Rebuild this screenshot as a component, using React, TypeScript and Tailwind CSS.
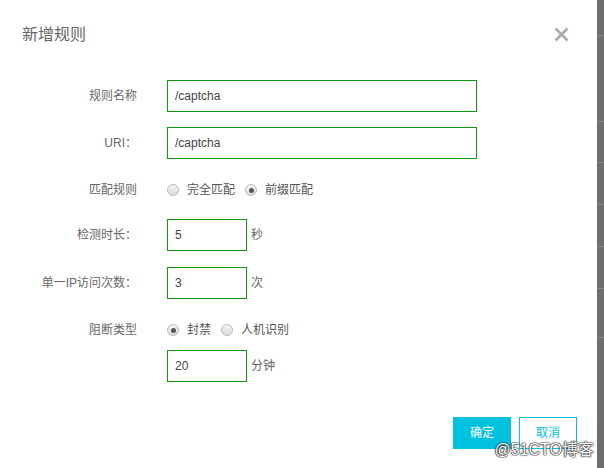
import React from 'react';

const font = { fontFamily: '"Liberation Sans", "Noto Sans CJK SC", sans-serif' };

const Radio: React.FC<{ checked?: boolean; label: string }> = ({ checked, label }) => (
  <label className="flex items-center">
    <span className="flex h-[12px] w-[12px] items-center justify-center rounded-full border border-[#b9b9b9] bg-gradient-to-b from-[#f4f4f4] to-[#dcdcdc]">
      {checked && <span className="h-[5px] w-[5px] rounded-full bg-[#555]" />}
    </span>
    <span className="ml-[8px] text-[12px] text-[#555]">{label}</span>
  </label>
);

const Row: React.FC<{ label: string; className?: string; children: React.ReactNode }> = ({
  label,
  className = '',
  children,
}) => (
  <div className={`flex h-[32px] items-center ${className}`}>
    <div className="w-[137px] shrink-0 text-right text-[12px] text-[#666]">{label}</div>
    <div className="ml-[30px] flex items-center">{children}</div>
  </div>
);

const Field: React.FC<{ value: string; wide?: boolean }> = ({ value, wide }) => (
  <div
    className={`flex h-[32px] items-center border border-[#109a10] pl-[7px] text-[12px] text-[#444] ${
      wide ? 'w-[310px]' : 'w-[80px]'
    }`}
  >
    {value}
  </div>
);

export default function App() {
  return (
    <div className="flex h-[468px] w-[604px] overflow-hidden bg-white" style={font}>
      <div className="relative flex flex-1 flex-col">
        <div className="flex items-center justify-between pl-[22px] pr-[28px] pt-[26px]">
          <h2 className="text-[16px] leading-[18px] text-[#666]">新增规则</h2>
          <svg width="15" height="15" viewBox="0 0 15 15" className="mt-[-1px]">
            <path d="M1.5 1.5 L13.5 13.5 M13.5 1.5 L1.5 13.5" stroke="#ababab" strokeWidth="2.8" />
          </svg>
        </div>

        <Row label="规则名称" className="mt-[36px]">
          <Field value="/captcha" wide />
        </Row>
        <Row label="URI：" className="mt-[15px]">
          <Field value="/captcha" wide />
        </Row>
        <Row label="匹配规则" className="mt-[15px]">
          <div className="flex items-center gap-[10px]">
            <Radio label="完全匹配" />
            <Radio label="前缀匹配" checked />
          </div>
        </Row>
        <Row label="检测时长：" className="mt-[13px]">
          <Field value="5" />
          <span className="ml-[4px] text-[12px] text-[#666]">秒</span>
        </Row>
        <Row label="单一IP访问次数：" className="mt-[16px]">
          <Field value="3" />
          <span className="ml-[4px] text-[12px] text-[#666]">次</span>
        </Row>
        <Row label="阻断类型" className="mt-[15px]">
          <div className="flex items-center gap-[10px]">
            <Radio label="封禁" checked />
            <Radio label="人机识别" />
          </div>
        </Row>
        <Row label="" className="mt-[4px]">
          <Field value="20" />
          <span className="ml-[4px] text-[12px] text-[#666]">分钟</span>
        </Row>

        <div className="mt-[35px] flex justify-end gap-[8px] pr-[20px]">
          <button className="h-[32px] w-[58px] bg-[#00c1de] text-[12px] text-white">确定</button>
          <button className="h-[32px] w-[58px] border border-[#00c1de] bg-white text-[12px] text-[#00c1de]">
            取消
          </button>
        </div>

        <div className="absolute bottom-[9px] right-[3px] text-[16px] leading-[18px] text-white [text-shadow:0_0_1px_#222,0_0_1px_#222,0_0_1px_#222,0_0_2px_#444]">
          @51CTO博客
        </div>
      </div>

      <div className="flex w-[7px] flex-col bg-[#6e6e6e]">
        <div className="h-[35px]" />
        <div className="h-[86px] border-t border-[#858585]" />
        <div className="h-[41px] border-t border-[#858585]" />
        <div className="h-[42px] border-t border-[#858585]" />
        <div className="h-[42px] border-t border-[#858585]" />
        <div className="h-[42px] border-t border-[#858585]" />
        <div className="h-[49px] border-t border-[#858585]" />
        <div className="flex-1 border-t border-[#858585]" />
      </div>
    </div>
  );
}
